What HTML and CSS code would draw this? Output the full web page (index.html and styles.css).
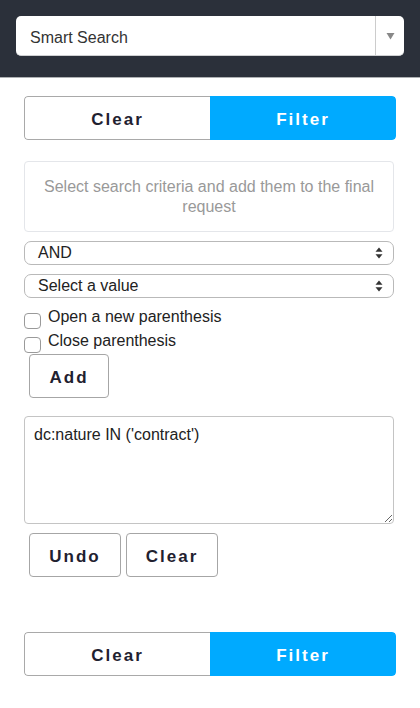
FILE: index.html
```html
<!DOCTYPE html>
<html>
<head>
<meta charset="utf-8">
<link rel="stylesheet" href="styles.css">
</head>
<body>
<header class="topbar">
  <div class="smart-select">
    <span class="smart-label">Smart Search</span>
    <span class="smart-arrow">
      <svg width="9" height="8" viewBox="0 0 9 8"><polygon points="0.5,1 8.5,1 4.5,7.5" fill="#888"/></svg>
    </span>
  </div>
</header>
<main class="content">
  <div class="bar">
    <div class="bar-btn bar-clear">Clear</div>
    <div class="bar-btn bar-filter">Filter</div>
  </div>

  <div class="info">Select search criteria and add them to the final request</div>

  <div class="select first">
    <span>AND</span>
    <svg class="updown" width="8" height="12" viewBox="0 0 8 12"><polygon points="4,0.5 7.5,4.8 0.5,4.8" fill="#333"/><polygon points="0.5,7.2 7.5,7.2 4,11.5" fill="#333"/></svg>
  </div>
  <div class="select">
    <span>Select a value</span>
    <svg class="updown" width="8" height="12" viewBox="0 0 8 12"><polygon points="4,0.5 7.5,4.8 0.5,4.8" fill="#333"/><polygon points="0.5,7.2 7.5,7.2 4,11.5" fill="#333"/></svg>
  </div>

  <div class="checks">
    <label class="check-row"><span class="box"></span><span class="check-text">Open a new parenthesis</span></label>
    <label class="check-row"><span class="box"></span><span class="check-text">Close parenthesis</span></label>
  </div>

  <div class="btn add">Add</div>

  <textarea class="query" readonly>dc:nature IN ('contract')</textarea>

  <div class="btn-row">
    <div class="btn undo">Undo</div>
    <div class="btn undo">Clear</div>
  </div>

  <div class="bar bottom">
    <div class="bar-btn bar-clear">Clear</div>
    <div class="bar-btn bar-filter">Filter</div>
  </div>
</main>
</body>
</html>
```

FILE: styles.css
```css
* { box-sizing: border-box; }

body {
  margin: 0;
  background: #fff;
  font-family: "Liberation Sans", Arial, sans-serif;
  color: #222;
}

.topbar {
  height: 78px;
  background: #2b303a;
  border-bottom: 1px solid #aeb0b3;
  padding: 16px 16px 0 16px;
}

.smart-select {
  width: 388px;
  height: 40px;
  background: #fff;
  border-radius: 5px;
  border-bottom: 1px solid #cfd0d2;
  display: flex;
  align-items: center;
}

.smart-label {
  flex: 1;
  padding-left: 14px;
  padding-top: 5px;
  font-size: 16px;
  color: #333;
}

.smart-arrow {
  width: 29px;
  height: 100%;
  border-left: 1px solid #ccc;
  display: flex;
  align-items: center;
  justify-content: center;
  padding-top: 1px;
}

.content {
  padding: 0 24px;
}

.bar {
  margin-top: 18px;
  width: 372px;
  height: 44px;
  display: flex;
  border-radius: 4px;
  overflow: hidden;
}

.bar.bottom {
  margin-top: 55px;
}

.bar-btn {
  width: 50%;
  flex: none;
  display: flex;
  align-items: center;
  justify-content: center;
  font-weight: bold;
  font-size: 17px;
  letter-spacing: 2px;
  padding-top: 3px;
}

.bar-clear {
  border: 1px solid #a9a9a9;
  border-right: none;
  border-radius: 4px 0 0 4px;
  color: #1f2130;
  background: #fff;
}

.bar-filter {
  background: #00aaff;
  color: #fff;
  border-radius: 0 4px 4px 0;
}

.info {
  margin-top: 21px;
  width: 370px;
  border: 1px solid #e4e6ea;
  border-radius: 4px;
  padding: 15px 14px 14px;
  text-align: center;
  font-size: 16px;
  line-height: 20px;
  color: #999;
}

.select {
  margin-top: 9px;
  width: 370px;
  height: 24px;
  border: 1px solid #b9b9b9;
  border-radius: 7px;
  display: flex;
  align-items: center;
  justify-content: space-between;
  padding: 0 10px 0 13px;
  font-size: 16px;
  color: #222;
}

.updown {
  display: block;
}

.checks {
  margin-top: 8px;
  display: flex;
  flex-direction: column;
  gap: 2px;
}

.check-row {
  display: flex;
  align-items: flex-start;
  height: 22px;
  font-size: 16px;
  line-height: 22px;
  color: #222;
}

.box {
  width: 17px;
  height: 16px;
  margin-top: 7px;
  border: 1px solid #9a9a9a;
  border-radius: 4px;
  background: #fff;
  margin-right: 7px;
  flex: none;
}

.btn {
  height: 44px;
  border: 1px solid #a6a6a6;
  border-radius: 4px;
  display: flex;
  align-items: center;
  justify-content: center;
  font-weight: bold;
  font-size: 17px;
  letter-spacing: 2px;
  color: #1f2130;
  background: #fff;
  padding-top: 3px;
}

.add {
  margin-top: 2px;
  margin-left: 5px;
  width: 80px;
}

.query {
  display: block;
  margin: 18px 0 0 0;
  width: 370px;
  height: 108px;
  border: 1px solid #c4c4c4;
  border-radius: 4px;
  padding: 8px 9px;
  font-family: "Liberation Sans", Arial, sans-serif;
  font-size: 16px;
  line-height: 20px;
  color: #222;
  resize: vertical;
  outline: none;
}

.btn-row {
  margin-top: 9px;
  margin-left: 5px;
  display: flex;
  gap: 5px;
}

.undo {
  width: 92px;
}
```
